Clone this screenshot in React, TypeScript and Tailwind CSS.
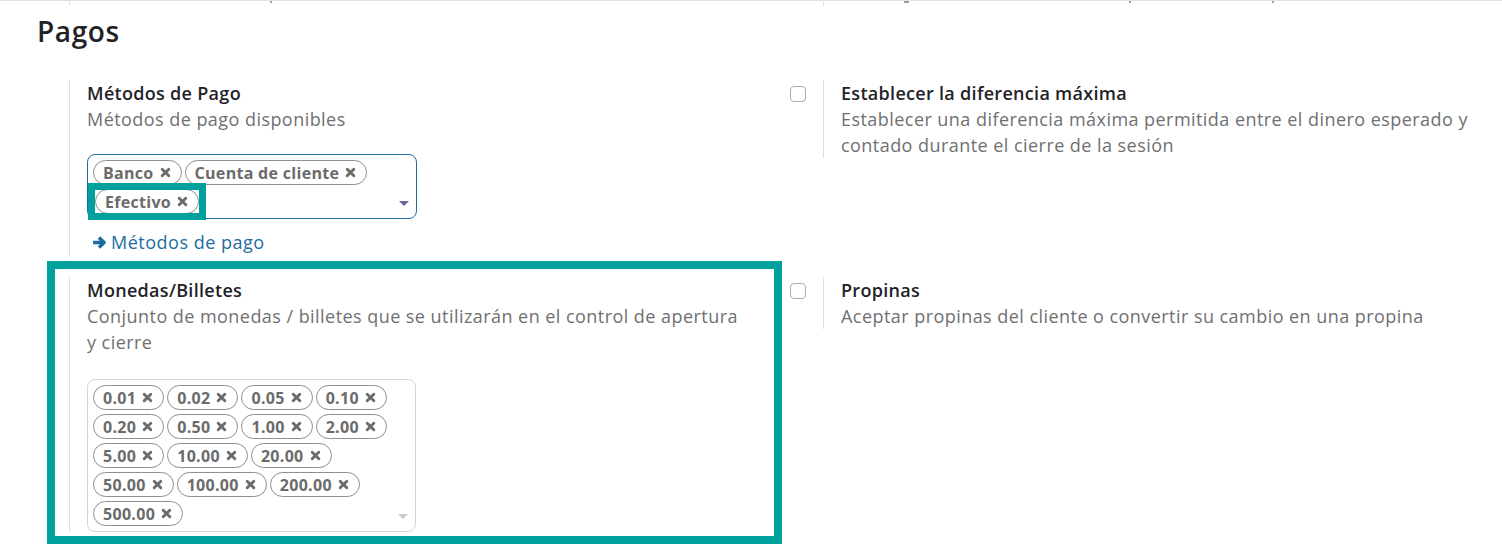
import React from "react";

const FONT = "font-['Open_Sans',sans-serif]";

function Tag({ label }: { label: string }) {
  return (
    <span className="inline-flex h-[25px] items-center gap-[6px] rounded-full border border-[#8f8f8f] bg-white pl-[9px] pr-[10px] text-[16px] font-bold leading-none tracking-[0.3px] text-[#6b6b6b]">
      {label}
      <svg viewBox="0 0 10 10" className="h-[11px] w-[11px]" aria-hidden>
        <path d="M2 2 L8 8 M8 2 L2 8" stroke="#6b6b6b" strokeWidth="2.6" strokeLinecap="round" />
      </svg>
    </span>
  );
}

function Caret({ active }: { active?: boolean }) {
  return (
    <span
      className={`absolute bottom-[12px] right-[7px] h-0 w-0 border-x-[5px] border-t-[5px] border-x-transparent ${
        active ? "border-t-[#6f5f9d]" : "border-t-[#c9cbce]"
      }`}
    />
  );
}

function Checkbox() {
  return <span className="mt-[6px] block h-[16px] w-[16px] rounded-[4px] border border-[#a9adb2] bg-white" />;
}

function Setting({
  check,
  title,
  lines,
  children,
  paneClass = "",
}: {
  check?: boolean;
  title: string;
  lines: string[];
  children?: React.ReactNode;
  paneClass?: string;
}) {
  return (
    <div className="flex">
      <div className="flex w-[54px] shrink-0 justify-end pr-[17px]">{check && <Checkbox />}</div>
      <div className={`border-l border-[#dcdfe3] pl-[17px] ${paneClass}`}>
        <div className="text-[18px] font-semibold leading-[26px] tracking-[0.3px] text-[#1f2328]">{title}</div>
        {lines.map((l) => (
          <div key={l} className="whitespace-nowrap text-[18px] leading-[26px] tracking-[0.45px] text-[#6f7072]">
            {l}
          </div>
        ))}
        {children}
      </div>
    </div>
  );
}

const coinRows = [
  ["0.01", "0.02", "0.05", "0.10"],
  ["0.20", "0.50", "1.00", "2.00"],
  ["5.00", "10.00", "20.00"],
  ["50.00", "100.00", "200.00"],
  ["500.00"],
];

export default function App() {
  return (
    <div className={`relative h-[552px] w-[1502px] overflow-hidden bg-white ${FONT}`}>
      {/* remnants of the section above */}
      <div className="relative h-[2px] border-t border-[#dee2e6]">
        <span className="absolute left-[69px] top-0 h-[4px] w-px bg-[#dcdfe3]" />
        <span className="absolute left-[270px] top-0 h-[2px] w-[2px] bg-[#9aa0a6]" />
        <span className="absolute left-[823px] top-0 h-[5px] w-px bg-[#dcdfe3]" />
        <span className="absolute left-[904px] top-0 h-[2px] w-[5px] bg-[#9aa0a6]" />
        <span className="absolute left-[1129px] top-0 h-[2px] w-[2px] bg-[#9aa0a6]" />
        <span className="absolute left-[1272px] top-0 h-[2px] w-[2px] bg-[#9aa0a6]" />
      </div>

      <h2 className="pl-[37px] pt-[13px] text-[28px] font-semibold leading-[32px] tracking-[0.6px] text-[#1f2328]">Pagos</h2>

      <div className="mt-[33px] grid grid-cols-[754px_1fr] pl-[15px]">
        {/* row 1 */}
        <Setting title="Métodos de Pago" lines={["Métodos de pago disponibles"]} paneClass="pb-[2px]">
          <div className="relative mt-[22px] w-[330px] rounded-[8px] border border-[#1f6fa3] px-[5px] pb-[4px] pt-[5px]">
            <div className="flex gap-[3px]">
              <Tag label="Banco" />
              <Tag label="Cuenta de cliente" />
            </div>
            <div className="mt-[4px] flex">
              <span className="relative ml-[2px]">
                <Tag label="Efectivo" />
                <span className="absolute -inset-x-[7px] -bottom-[6px] -top-[6px] border-[7px] border-[#00a09d]" />
              </span>
            </div>
            <Caret active />
          </div>
          <a className="mt-[10px] flex items-center gap-[4px] pl-[5px] text-[18px] leading-[26px] tracking-[0.5px] text-[#1c6ea0]">
            <svg viewBox="0 0 14 14" className="h-[15px] w-[15px]" aria-hidden>
              <path d="M1 7 H11 M6.5 2.3 L11.3 7 L6.5 11.7" stroke="#1c6ea0" strokeWidth="3.2" fill="none" strokeLinejoin="round" />
            </svg>
            Métodos de pago
          </a>
        </Setting>
        <Setting check title="Establecer la diferencia máxima" lines={["Establecer una diferencia máxima permitida entre el dinero esperado y", "contado durante el cierre de la sesión"]} paneClass="self-start" />

        {/* row 2 */}
        <div className="relative mt-[20px]">
          <Setting
            title="Monedas/Billetes"
            lines={["Conjunto de monedas / billetes que se utilizarán en el control de apertura", "y cierre"]}
          >
            <div className="relative mt-[24px] w-[329px] rounded-[8px] border border-[#d3d5d8] px-[5px] pb-[5px] pt-[5px]">
              <div className="flex flex-col gap-[4px]">
                {coinRows.map((row, i) => (
                  <div key={i} className="flex gap-[3px]">
                    {row.map((c) => (
                      <Tag key={c} label={c} />
                    ))}
                  </div>
                ))}
              </div>
              <Caret />
            </div>
          </Setting>
          <span className="pointer-events-none absolute left-[32px] top-[-16px] h-[283px] w-[735px] border-[8px] border-[#00a09d]" />
        </div>
        <div className="mt-[20px]">
          <Setting check title="Propinas" lines={["Aceptar propinas del cliente o convertir su cambio en una propina"]} paneClass="self-start" />
        </div>
      </div>
    </div>
  );
}
